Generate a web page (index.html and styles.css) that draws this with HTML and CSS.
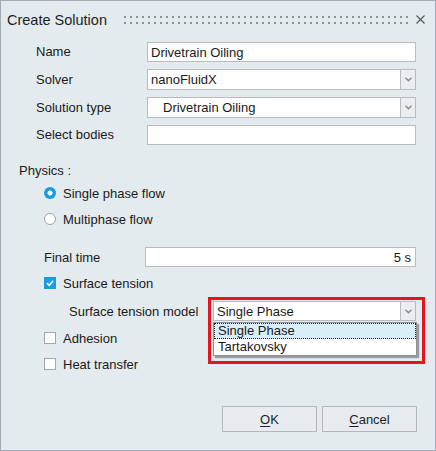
FILE: index.html
```html
<!DOCTYPE html>
<html>
<head>
<meta charset="utf-8">
<link rel="stylesheet" href="styles.css">
</head>
<body>
<div class="dialog">
  <div class="titlebar">
    <span class="title">Create Solution</span>
    <svg class="grip" width="286" height="8" viewBox="0 0 286 8">
      <defs><pattern id="dots" width="6" height="6" patternUnits="userSpaceOnUse"><rect width="2" height="2" fill="#8d9195"/></pattern></defs>
      <rect width="286" height="8" fill="url(#dots)"/>
    </svg>
    <svg class="close" width="9" height="9" viewBox="0 0 9 9"><path d="M0.5 0.5 L8.5 8.5 M8.5 0.5 L0.5 8.5" stroke="#555" stroke-width="1.1"/></svg>
  </div>

  <div class="form">
    <span class="lbl">Name</span>
    <div class="input">Drivetrain Oiling</div>
    <span class="lbl">Solver</span>
    <div class="select"><div class="sel-text">nanoFluidX</div><div class="sel-btn"><svg width="7" height="5" viewBox="0 0 7 5"><path d="M0.5 0.8 L3.5 3.8 L6.5 0.8" fill="none" stroke="#8a8a8a" stroke-width="1.4"/></svg></div></div>
    <span class="lbl">Solution type</span>
    <div class="select"><div class="sel-text indent">Drivetrain Oiling</div><div class="sel-btn"><svg width="7" height="5" viewBox="0 0 7 5"><path d="M0.5 0.8 L3.5 3.8 L6.5 0.8" fill="none" stroke="#8a8a8a" stroke-width="1.4"/></svg></div></div>
    <span class="lbl">Select bodies</span>
    <div class="input"></div>
  </div>

  <div class="physics">Physics :</div>
  <div class="opt"><span class="radio on"></span><span>Single phase flow</span></div>
  <div class="opt"><span class="radio"></span><span>Multiphase flow</span></div>

  <div class="time-row">
    <span class="time-lbl">Final time</span>
    <div class="input right">5 s</div>
  </div>

  <div class="opt check-row"><span class="check on"><svg width="10" height="10" viewBox="0 0 10 10"><path d="M2 5.2 L4.2 7.3 L8.2 2.8" fill="none" stroke="#fff" stroke-width="1.6"/></svg></span><span>Surface tension</span></div>

  <div class="model-row">
    <span class="model-lbl">Surface tension model</span>
    <div class="model-wrap">
      <div class="select"><div class="sel-text">Single Phase</div><div class="sel-btn"><svg width="7" height="5" viewBox="0 0 7 5"><path d="M0.5 0.8 L3.5 3.8 L6.5 0.8" fill="none" stroke="#8a8a8a" stroke-width="1.4"/></svg></div></div>
      <div class="dropdown">
        <div class="item sel">Single Phase</div>
        <div class="item">Tartakovsky</div>
      </div>
      <div class="highlight"></div>
    </div>
  </div>

  <div class="opt check-row"><span class="check"></span><span>Adhesion</span></div>
  <div class="opt check-row"><span class="check"></span><span>Heat transfer</span></div>

  <div class="footer">
    <button class="btn"><u>O</u>K</button>
    <button class="btn"><u>C</u>ancel</button>
  </div>
</div>
</body>
</html>
```

FILE: styles.css
```css
* { box-sizing: border-box; }
html, body { margin: 0; padding: 0; }
body {
  width: 436px;
  height: 451px;
  font-family: "Liberation Sans", Arial, sans-serif;
  font-size: 13px;
  color: #1a1a1a;
  background: #e4ebef;
}
.dialog {
  width: 436px;
  height: 451px;
  border: 1px solid #a3aab1;
  background: #e4ebef;
  display: flex;
  flex-direction: column;
}
.titlebar {
  height: 37px;
  display: flex;
  align-items: center;
  padding-left: 6px;
}
.title {
  font-size: 14.5px;
  color: #1e1e1e;
  width: 117px;
}
.grip { display: block; margin-top: 1px; }
.close { display: block; margin-left: 6px; }

.form {
  display: grid;
  grid-template-columns: 111px 269px;
  grid-template-rows: 20px 21px 21px 20px;
  row-gap: 7px;
  padding-left: 35px;
  padding-top: 4px;
  align-items: center;
}
.lbl { line-height: 16px; }
.input {
  height: 100%;
  background: #fff;
  border: 1px solid #b9bcbf;
  padding: 0 3px;
  display: flex;
  align-items: center;
  white-space: nowrap;
}
.input.right { justify-content: flex-end; padding-right: 4px; }
.select {
  display: flex;
  height: 100%;
}
.sel-text {
  flex: 1;
  background: #fff;
  border: 1px solid #b9bcbf;
  padding: 0 3px;
  display: flex;
  align-items: center;
  white-space: nowrap;
}
.sel-text.indent { padding-left: 15px; }
.sel-btn {
  width: 15px;
  border: 1px solid #b9bcbf;
  border-left: none;
  background: #eaeef1;
  display: flex;
  align-items: center;
  justify-content: center;
}
.sel-btn svg { display: block; }

.physics {
  margin-top: 17px;
  height: 18px;
  line-height: 18px;
  padding-left: 18px;
}
.opt {
  height: 26px;
  display: flex;
  align-items: center;
  padding-left: 43px;
}
.radio {
  width: 12px;
  height: 12px;
  border-radius: 50%;
  border: 1px solid #9ea3a7;
  background: #fff;
  margin-right: 7px;
  flex: none;
}
.radio.on {
  border: none;
  background: radial-gradient(circle, #fff 0 2.3px, #1a9ae0 2.8px);
}
.check {
  width: 12px;
  height: 12px;
  border: 1px solid #a4a8ac;
  background: #fff;
  margin-right: 7px;
  flex: none;
  display: flex;
  align-items: center;
  justify-content: center;
}
.check.on { background: #1b9be2; border-color: #1b9be2; }
.check svg { display: block; }

.time-row {
  margin-top: 15px;
  height: 20px;
  display: flex;
  align-items: center;
  padding-left: 43px;
}
.time-lbl { width: 101px; }
.time-row .input { width: 271px; }

.time-row + .check-row { margin-top: 3px; }

.model-row {
  margin-top: 5px;
  height: 20px;
  display: flex;
  align-items: center;
  padding-left: 68px;
}
.model-lbl { width: 144px; }
.model-wrap {
  position: relative;
  width: 203px;
  height: 20px;
}
.dropdown {
  position: absolute;
  left: 0;
  top: 21px;
  width: 204px;
  background: #fff;
  border: 1px solid #8e9296;
  box-shadow: 2px 2px 1px rgba(90, 95, 100, 0.55);
  z-index: 2;
}
.item {
  height: 16px;
  line-height: 14px;
  padding-left: 3px;
  border: 1px solid transparent;
  white-space: nowrap;
}
.item.sel {
  background: #d9eef9;
  border: 1px dotted #222;
}
.highlight {
  position: absolute;
  left: -5px;
  top: -4px;
  width: 217px;
  height: 67px;
  border: 3px solid #e6141e;
  z-index: 3;
  pointer-events: none;
}
.model-row + .check-row { margin-top: 4px; }

.footer {
  margin-top: auto;
  display: flex;
  justify-content: flex-end;
  gap: 5px;
  padding: 0 18px 18px 0;
}
.btn {
  width: 95px;
  height: 26px;
  font-family: "Liberation Sans", Arial, sans-serif;
  font-size: 13px;
  color: #1e1e1e;
  background: #e6ecf0;
  border: 1px solid #b4b8bc;
  border-radius: 0;
  padding: 0;
}
.btn u { text-decoration-thickness: 1px; text-underline-offset: 2px; }
```
